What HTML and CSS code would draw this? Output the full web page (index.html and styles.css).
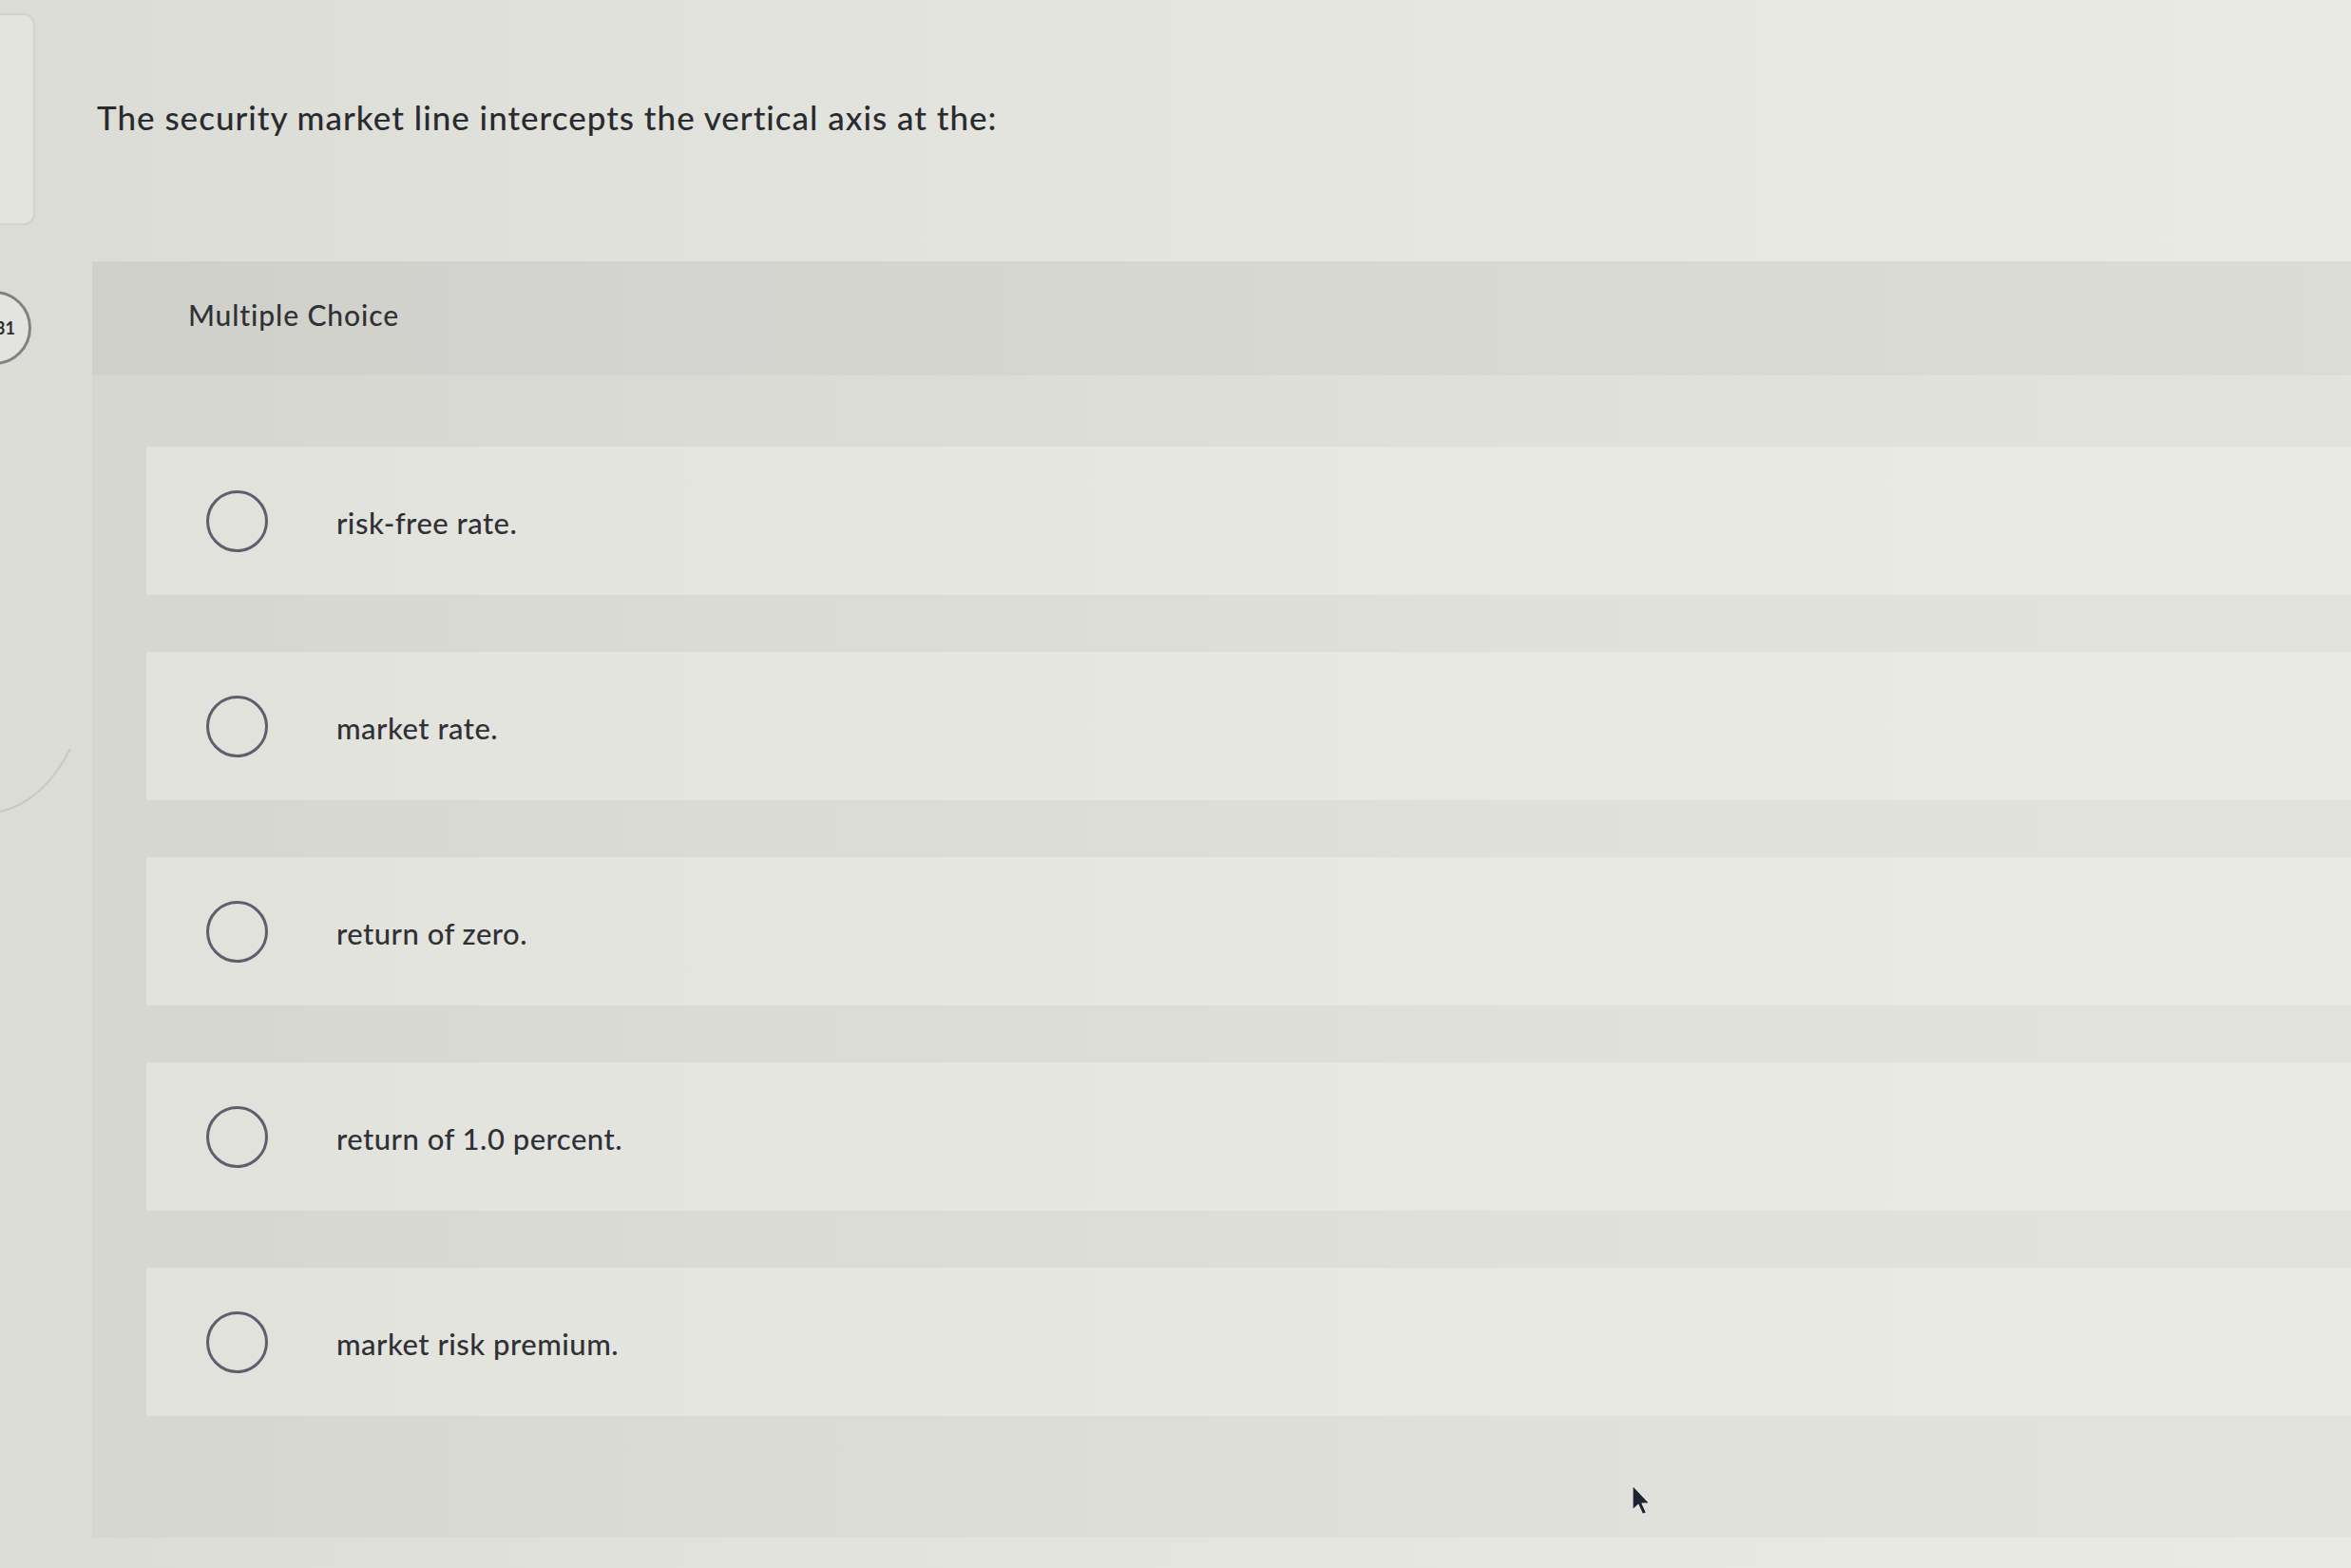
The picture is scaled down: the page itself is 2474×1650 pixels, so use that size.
FILE: index.html
```html
<!DOCTYPE html>
<html lang="en">
<head>
<meta charset="utf-8">
<title>Multiple Choice</title>
<link rel="stylesheet" href="styles.css">
</head>
<body>
<div class="page">
  <aside class="sidebar">
    <div class="nav-box"></div>
    <div class="badge"><span>31</span></div>
    <svg class="arc" width="80" height="80" viewBox="0 0 80 80"><path d="M0 72 Q45 62 74 6" fill="none" stroke="#c8c8c3" stroke-width="2"/></svg>
  </aside>
  <main class="main">
    <p class="question">The security market line intercepts the vertical axis at the:</p>
    <section class="panel">
      <div class="panel-header">Multiple Choice</div>
      <div class="options">
        <label class="option"><span class="radio"></span><span class="option-text">risk-free rate.</span></label>
        <label class="option"><span class="radio"></span><span class="option-text">market rate.</span></label>
        <label class="option"><span class="radio"></span><span class="option-text">return of zero.</span></label>
        <label class="option"><span class="radio"></span><span class="option-text">return of 1.0 percent.</span></label>
        <label class="option"><span class="radio"></span><span class="option-text">market risk premium.</span></label>
      </div>
    </section>
  </main>
</div>
<svg class="cursor" width="24" height="34" viewBox="0 0 24 34"><path d="M2 1 L2 27 L8 21.5 L12.5 31.5 L16.5 29.8 L12 20 L20 20 Z" fill="#1d2330" stroke="#e8e8e4" stroke-width="1.2" stroke-linejoin="round"/></svg>
</body>
</html>
```
FILE: styles.css
```css
html, body {
  margin: 0;
  padding: 0;
}
body {
  width: 2474px;
  height: 1650px;
  overflow: hidden;
  position: relative;
  background: linear-gradient(90deg, #dcdcd7 0%, #e2e2dd 30%, #e7e7e2 65%, #eaeae5 100%);
  font-family: Lato, "Liberation Sans", sans-serif;
  color: #2f3034;
}
.page {
  display: flex;
  align-items: flex-start;
}
.sidebar {
  flex: 0 0 97px;
  display: flex;
  flex-direction: column;
  align-items: flex-start;
}
.nav-box {
  margin-top: 14px;
  margin-left: -20px;
  width: 53px;
  height: 219px;
  border: 2px solid #d2d2ce;
  border-radius: 12px;
  background: rgba(235, 235, 230, 0.5);
}
.badge {
  margin-top: 69px;
  margin-left: -57px;
  width: 84px;
  height: 72px;
  border: 3px solid #7f8284;
  border-radius: 40px;
  display: flex;
  align-items: center;
  justify-content: flex-end;
  box-sizing: content-box;
  background: #e3e3df;
}
.badge span {
  font-size: 18px;
  font-weight: 700;
  color: #2d2e31;
  margin-right: 14px;
}
.arc {
  margin-top: 398px;
}
.main {
  flex: 1;
  min-width: 0;
}
.question {
  margin: 102px 0 0 5px;
  font-size: 35px;
  font-weight: 500;
  line-height: 42px;
  letter-spacing: 1px;
  color: #2a2b2f;
}
.panel {
  margin-top: 131px;
  background: rgba(120, 120, 110, 0.06);
  padding-bottom: 128px;
}
.panel-header {
  height: 82px;
  padding: 38px 0 0 101px;
  font-size: 30px;
  font-weight: 500;
  line-height: 36px;
  letter-spacing: 0.9px;
  color: #303136;
  background: rgba(100, 100, 92, 0.05);
}
.options {
  padding-top: 75px;
  display: flex;
  flex-direction: column;
  gap: 60px;
}
.option {
  margin-left: 57px;
  height: 156px;
  display: flex;
  align-items: center;
  padding-left: 63px;
  background: rgba(250, 250, 244, 0.34);
}
.radio {
  flex: 0 0 auto;
  width: 59px;
  height: 59px;
  border: 3px solid #5c606d;
  border-radius: 50%;
}
.option-text {
  margin-left: 72px;
  font-size: 31px;
  font-weight: 500;
  line-height: 38px;
  letter-spacing: 0.5px;
  color: #303136;
  margin-top: 4px;
}
.cursor {
  position: absolute;
  left: 1716px;
  top: 1562px;
}
```
